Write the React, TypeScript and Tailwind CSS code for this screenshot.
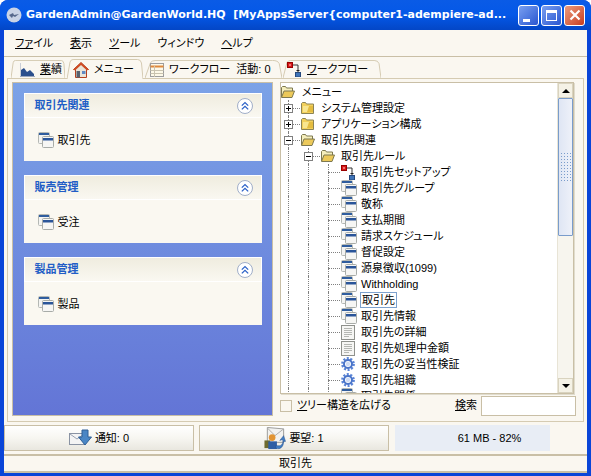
import { ReactNode } from "react";

const FONT = "font-['Liberation_Sans','Noto_Sans_CJK_JP',sans-serif] [font-feature-settings:'palt']";

function WindowsIcon() {
  return (
    <svg width="16" height="16" viewBox="0 0 16 16" className="shrink-0">
      <rect x="0.5" y="0.5" width="11" height="11" rx="1" fill="#f4f4f2" stroke="#b4b8b4" />
      <rect x="1" y="1" width="10" height="2" fill="#2f5d9e" />
      <rect x="4.5" y="4.5" width="11" height="11" rx="1" fill="#f6f6f4" stroke="#a8aca8" />
      <rect x="5" y="6" width="10" height="2.5" fill="#2a5599" />
    </svg>
  );
}

function FolderClosed() {
  return (
    <svg width="13" height="12" viewBox="0 0 13 12" className="shrink-0">
      <path d="M.5 3V1.5l1-1h3l1 1.5h7v9.5H.5z" fill="#f2d05c" stroke="#8c8456" />
      <path d="M2 4h10v6H2z" fill="#f8e690" />
      <path d="M8 4h4v6H6z" fill="#e4bc40" />
    </svg>
  );
}

function FolderOpen() {
  return (
    <svg width="14" height="12" viewBox="0 0 14 12" className="shrink-0">
      <path d="M.5 11V1.5l1-1h3l1 1.5h6V5" fill="#f5eebc" stroke="#7d7850" />
      <path d="M.5 11.5 3 5h10.5L11 11.5z" fill="#ecc95a" stroke="#7d7850" />
    </svg>
  );
}

function DocIcon() {
  return (
    <svg width="14" height="15" viewBox="0 0 14 15" className="shrink-0">
      <rect x="0.5" y="0.5" width="13" height="14" fill="#f6f6f4" stroke="#8f918c" />
      <path d="M3 3.5h8M3 5.5h8M3 7.5h8M3 9.5h8M3 11.5h5" stroke="#b5b7b3" />
    </svg>
  );
}

function GearIcon() {
  return (
    <svg width="14" height="14" viewBox="0 0 14 14" className="shrink-0">
      <circle cx="7" cy="7" r="5.6" fill="none" stroke="#5a84d6" strokeWidth="2.6" strokeDasharray="2 1.5" />
      <circle cx="7" cy="7" r="4" fill="none" stroke="#4a74c8" strokeWidth="2" />
      <circle cx="7" cy="7" r="2.2" fill="#cfdcf4" />
    </svg>
  );
}

function FlowIcon() {
  return (
    <svg width="15" height="15" viewBox="0 0 15 15" className="shrink-0">
      <rect x="0.5" y="0.5" width="5" height="5" fill="#d81818" stroke="#900" />
      <rect x="2" y="2" width="2" height="2" fill="#f07070" />
      <path d="M6 3h5v6" fill="none" stroke="#333" />
      <path d="M9 8h4l-2 2z" fill="#222" />
      <rect x="8.5" y="10.5" width="5" height="4.5" fill="#3f74b8" stroke="#26497c" />
    </svg>
  );
}

function ChevronCircle() {
  return (
    <svg width="16" height="16" viewBox="0 0 16 16" className="shrink-0">
      <circle cx="8" cy="8" r="7.5" fill="#fff" stroke="#a0aec8" />
      <path d="M4.8 7.6 8 4.6l3.2 3M4.8 11.4 8 8.4l3.2 3" fill="none" stroke="#2c62c8" strokeWidth="1.3" />
    </svg>
  );
}

function TabShape() {
  return (
    <svg className="absolute inset-0 h-full w-full" viewBox="0 0 100 20" preserveAspectRatio="none">
      <path d="M0 20 4 3Q5 .5 8 .5H93Q97 .5 98 4L100 20" fill="#faf7f0" stroke="#d5cbb2" vectorEffect="non-scaling-stroke" />
    </svg>
  );
}

function Tab({ width, left, icon, children, active }: { width: number; left: number; icon: ReactNode; children: ReactNode; active?: boolean }) {
  return (
    <div className={`relative flex shrink-0 items-center ${active ? "z-10 -mb-px h-[20px]" : "h-[18px]"}`} style={{ width, paddingLeft: left }}>
      <TabShape />
      <div className="relative flex items-center gap-[5px] pt-px text-[11px] leading-none text-black">
        {icon}
        <span className="whitespace-nowrap">{children}</span>
      </div>
    </div>
  );
}

function Card({ title, item }: { title: string; item: string }) {
  return (
    <div className="w-[238px] bg-[#faf8f1]">
      <div className="flex h-[25px] items-center justify-between border-y border-white bg-gradient-to-b from-[#efecdf] to-[#faf8f1] pl-[11px] pr-[9px] shadow-[inset_1px_0_#fff,inset_-1px_0_#fff]">
        <span className="text-[11px] font-bold text-[#215dc6]">{title}</span>
        <ChevronCircle />
      </div>
      <div className="flex h-[43px] items-center gap-1 pl-[14px] pt-px text-[11px] text-black">
        <WindowsIcon />
        <span>{item}</span>
      </div>
    </div>
  );
}

function Guide() {
  return <span className="h-4 w-5 shrink-0 pl-1"><span className="block h-full border-l border-dotted border-[#808080]" /></span>;
}

function Connector({ box }: { box?: "+" | "-" }) {
  return (
    <span className="relative h-4 w-[17px] shrink-0">
      <span className="absolute left-1 top-0 h-4 border-l border-dotted border-[#808080]" />
      <span className="absolute left-1 right-[1px] top-2 border-t border-dotted border-[#808080]" />
      {box && (
        <span className="absolute left-0 top-1 flex h-[9px] w-[9px] items-center justify-center border border-[#808080] bg-white">
          <span className="absolute h-px w-[5px] bg-black" />
          {box === "+" && <span className="absolute h-[5px] w-px bg-black" />}
        </span>
      )}
    </span>
  );
}

type Row = { text: string; icon: "win" | "doc" | "gear" | "flow"; selected?: boolean };

const leaves: Row[] = [
  { text: "取引先セットアップ", icon: "flow" },
  { text: "取引先グループ", icon: "win" },
  { text: "敬称", icon: "win" },
  { text: "支払期間", icon: "win" },
  { text: "請求スケジュール", icon: "win" },
  { text: "督促設定", icon: "win" },
  { text: "源泉徴収(1099)", icon: "win" },
  { text: "Withholding", icon: "win" },
  { text: "取引先", icon: "win", selected: true },
  { text: "取引先情報", icon: "win" },
  { text: "取引先の詳細", icon: "doc" },
  { text: "取引先処理中金額", icon: "doc" },
  { text: "取引先の妥当性検証", icon: "gear" },
  { text: "取引先組織", icon: "gear" },
  { text: "取引先関係", icon: "win" },
];

function LeafIcon({ kind }: { kind: Row["icon"] }) {
  if (kind === "win") return <WindowsIcon />;
  if (kind === "doc") return <DocIcon />;
  if (kind === "gear") return <GearIcon />;
  return <FlowIcon />;
}

function Tree() {
  return (
    <div className="min-w-0 flex-1 overflow-hidden pl-[3px] pt-px text-[11px] leading-4 text-black">
      <div className="-ml-[3px] flex h-4 items-center">
        <span className="w-[21px] shrink-0"><FolderOpen /></span>
        <span>メニュー</span>
      </div>
      <div className="flex h-4 items-center">
        <Connector box="+" />
        <span className="w-5 shrink-0"><FolderClosed /></span>
        <span>システム管理設定</span>
      </div>
      <div className="flex h-4 items-center">
        <Connector box="+" />
        <span className="w-5 shrink-0"><FolderClosed /></span>
        <span>アプリケーション構成</span>
      </div>
      <div className="flex h-4 items-center">
        <Connector box="-" />
        <span className="w-5 shrink-0"><FolderOpen /></span>
        <span>取引先関連</span>
      </div>
      <div className="flex h-4 items-center">
        <Guide />
        <Connector box="-" />
        <span className="w-5 shrink-0"><FolderOpen /></span>
        <span>取引先ルール</span>
      </div>
      {leaves.map((l) => (
        <div key={l.text} className="flex h-4 items-center">
          <Guide />
          <Guide />
          <Connector />
          <span className="w-5 shrink-0"><LeafIcon kind={l.icon} /></span>
          <span className={l.selected ? "-ml-px border border-[#7da2ce] bg-white px-[1px] leading-[14px]" : ""}>{l.text}</span>
        </div>
      ))}
    </div>
  );
}

function Scrollbar() {
  return (
    <div className="flex h-full w-4 shrink-0 flex-col border-l border-[#e8e4d6] bg-[#f7f5ee]">
      <div className="flex h-[15px] items-center justify-center border border-[#d9d3bf] bg-[#f5f2e6]">
        <span className="border-x-[4px] border-b-[4px] border-x-transparent border-b-black" />
      </div>
      <div className="flex h-[138px] items-center justify-center rounded-[1px] border border-[#7a9ccb] bg-gradient-to-r from-[#dfe6f4] to-[#eef1f9]">
        <div className="grid grid-cols-4 gap-x-[2px] gap-y-[2px]">
          {Array.from({ length: 40 }).map((_, i) => (
            <span key={i} className="h-px w-px bg-[#7a9ccb]" />
          ))}
        </div>
      </div>
      <div className="flex-1" />
      <div className="flex h-[15px] items-center justify-center border border-[#d9d3bf] bg-[#f5f2e6]">
        <span className="border-x-[4px] border-t-[4px] border-x-transparent border-t-black" />
      </div>
    </div>
  );
}

function MailDownIcon() {
  return (
    <svg width="23" height="18" viewBox="0 0 23 18" className="shrink-0">
      <rect x="0.5" y="4.5" width="15" height="11" fill="#f4f4f4" stroke="#8a93a3" />
      <path d="M1 5l7 5 7-5" fill="none" stroke="#9aa3b2" />
      <path d="M13 1h6v7h3.5L16 16 9.5 8H13z" fill="#4a86c5" stroke="#2f5f96" />
    </svg>
  );
}

function RequestIcon() {
  return (
    <svg width="22" height="23" viewBox="0 0 22 24" className="shrink-0">
      <path d="M3 .5 20 2v14H3z" fill="#f2f2f0" stroke="#9a9a98" />
      <path d="M3 1l8 8 9-7" fill="none" stroke="#aaa" />
      <circle cx="8" cy="11" r="3.5" fill="#e19434" />
      <rect x="0" y="14" width="6" height="8" fill="#6d6a2e" />
      <path d="M4 15h9v8H4z" fill="#2e5ea4" />
      <path d="M12 19c5 2 8-1 7-6l-3 1 4-5 2 6h-2c0 6-4 9-8 7z" fill="#3f7dc4" stroke="#274f88" strokeWidth=".5" />
    </svg>
  );
}

function StatusButton({ children, icon }: { children: ReactNode; icon: ReactNode }) {
  return (
    <div className="flex h-[26px] w-[190px] shrink-0 items-center justify-center gap-[3px] border border-[#c9bfa6] bg-gradient-to-b from-white via-[#f7f6f1] to-[#e9e7df] text-[11px] text-black">
      {icon}
      <span>{children}</span>
    </div>
  );
}

export default function App() {
  return (
    <div className={`flex h-[476px] w-[591px] flex-col overflow-hidden rounded-t-[8px] bg-[#0a45d8] ${FONT}`}>
      {/* title bar */}
      <div className="flex h-[30px] shrink-0 items-center bg-gradient-to-b from-[#0a5be6] via-[#0458e8] to-[#0346c6] pl-[6px] pr-[6px]">
        <svg width="16" height="16" viewBox="0 0 16 16" className="shrink-0">
          <circle cx="8" cy="8" r="7.5" fill="#c9d3e6" />
          <path d="M3 8l4-2 1 2 5-1-4 3-2-1-1 2z" fill="#56688c" />
        </svg>
        <span className="ml-1 min-w-0 flex-1 overflow-hidden whitespace-nowrap font-['DejaVu_Sans','Noto_Sans_CJK_JP',sans-serif] text-[11px] font-bold text-white">
          GardenAdmin@GardenWorld.HQ&nbsp; [MyAppsServer{"{"}computer1-adempiere-ad...
        </span>
        <div className="flex shrink-0 gap-[2px]">
          <div className="flex h-[21px] w-[21px] items-end justify-start rounded-[3px] border border-white bg-gradient-to-br from-[#7a9ff0] to-[#2a55d0] pb-[3px] pl-1">
            <span className="h-[3px] w-[7px] bg-white" />
          </div>
          <div className="flex h-[21px] w-[21px] items-center justify-center rounded-[3px] border border-white bg-gradient-to-br from-[#7a9ff0] to-[#2a55d0]">
            <span className="h-[11px] w-[11px] border border-t-[3px] border-white" />
          </div>
          <div className="flex h-[21px] w-[21px] items-center justify-center rounded-[3px] border border-white bg-gradient-to-br from-[#ea9a7c] to-[#c63a1c]">
            <svg width="12" height="12" viewBox="0 0 12 12"><path d="M1.5 1.5l9 9M10.5 1.5l-9 9" stroke="#fff" strokeWidth="2.2" /></svg>
          </div>
        </div>
      </div>

      <div className="mx-[4px] mb-[4px] flex min-h-0 flex-1 flex-col bg-[#faf7f0]">
        {/* menu bar */}
        <div className="flex h-[27px] shrink-0 items-center gap-[17px] border-b border-[#c9bfa6] pl-[11px] text-[11px] text-black">
          <span><u>ファ</u>イル</span>
          <span><u>表</u>示</span>
          <span><u>ツ</u>ール</span>
          <span>ウィンドウ</span>
          <span><u>ヘ</u>ルプ</span>
        </div>

        {/* tabs */}
        <div className="flex h-[21px] shrink-0 items-end pl-[7px]">
          <Tab width={54} left={9} icon={
            <svg width="15" height="14" viewBox="0 0 15 14"><path d="M0 0v13.5h15" fill="none" stroke="#9aa6bc" /><path d="M1 13V7l3-2 3 4 3-2 4 4v2z" fill="#2b4f8c" /></svg>
          }><u>業</u>績</Tab>
          <span className="w-[2px]" />
          <Tab width={76} left={6} active icon={
            <svg width="16" height="16" viewBox="0 0 16 16"><path d="M8 .5.5 7.5h2V15.5h11V7.5h2z" fill="#e9e4d8" stroke="#b33f1e" /><path d="M8 .5.5 7.5 2 8.5 8 3l6 5.5 1.5-1z" fill="#cf4a22" /><rect x="3.5" y="9" width="3.5" height="6.5" fill="#56616f" /><rect x="9" y="9" width="3.5" height="3" fill="#5f8ac4" /></svg>
          }>メニュー</Tab>
          <span className="w-[2px]" />
          <Tab width={137} left={5} icon={
            <svg width="14" height="14" viewBox="0 0 14 14"><rect x=".5" y=".5" width="13" height="13" fill="#fdf9e8" stroke="#9d9d9d" /><path d="M.5 3.5h13" stroke="#e08a3c" strokeWidth="2" /><path d="M.5 7.5h13M.5 10.5h13M4.5 3v11" stroke="#c9c3b0" /></svg>
          }>ワークフロー&nbsp; 活動: 0</Tab>
          <span className="w-px" />
          <Tab width={98} left={4} icon={<FlowIcon />}><u>ワ</u>ークフロー</Tab>
        </div>

        {/* main panel */}
        <div className="mx-[3px] flex h-[344px] shrink-0 gap-[7px] border border-[#d5cbb2] pb-[5px] pl-[4px] pr-[9px] pt-[3px]">
          <div className="flex w-[261px] shrink-0 flex-col items-center gap-[14px] border border-[#c9bfa6] bg-gradient-to-b from-[#7ba2e7] to-[#6375d6] pt-[10px]">
            <Card title="取引先関連" item="取引先" />
            <Card title="販売管理" item="受注" />
            <Card title="製品管理" item="製品" />
          </div>

          <div className="flex min-w-0 flex-1 flex-col">
            <div className="flex h-[312px] shrink-0 overflow-hidden border border-[#c9bfa6] bg-white shadow-[1px_1px_0_#e0dccd]">
              <Tree />
              <Scrollbar />
            </div>
            <div className="-mr-[2px] flex flex-1 items-center pt-[1px] text-[11px] text-black">
              <span className="h-[12px] w-[12px] border border-[#c9bfa6] bg-[#faf7f0]" />
              <span className="ml-[5px]"><u>ツ</u>リー構造を広げる</span>
              <span className="ml-auto"><u>検</u>索</span>
              <span className="ml-[4px] h-[20px] w-[95px] border border-[#c9bfa6] bg-white" />
            </div>
          </div>
        </div>

        {/* bottom buttons */}
        <div className="mt-[3px] flex h-[26px] shrink-0 gap-[5px]">
          <StatusButton icon={<MailDownIcon />}>通知: 0</StatusButton>
          <StatusButton icon={<RequestIcon />}>要望: 1</StatusButton>
          <div className="ml-px flex w-[155px] items-center justify-center bg-[#e8edf5] pl-[34px] text-[11px] text-black">61 MB - 82%</div>
        </div>

        {/* status bar */}
        <div className="mt-[3px] flex h-[19px] shrink-0 items-center justify-center border-y-2 border-[#c9bfa6] text-[11px] text-black">取引先</div>
      </div>
    </div>
  );
}
